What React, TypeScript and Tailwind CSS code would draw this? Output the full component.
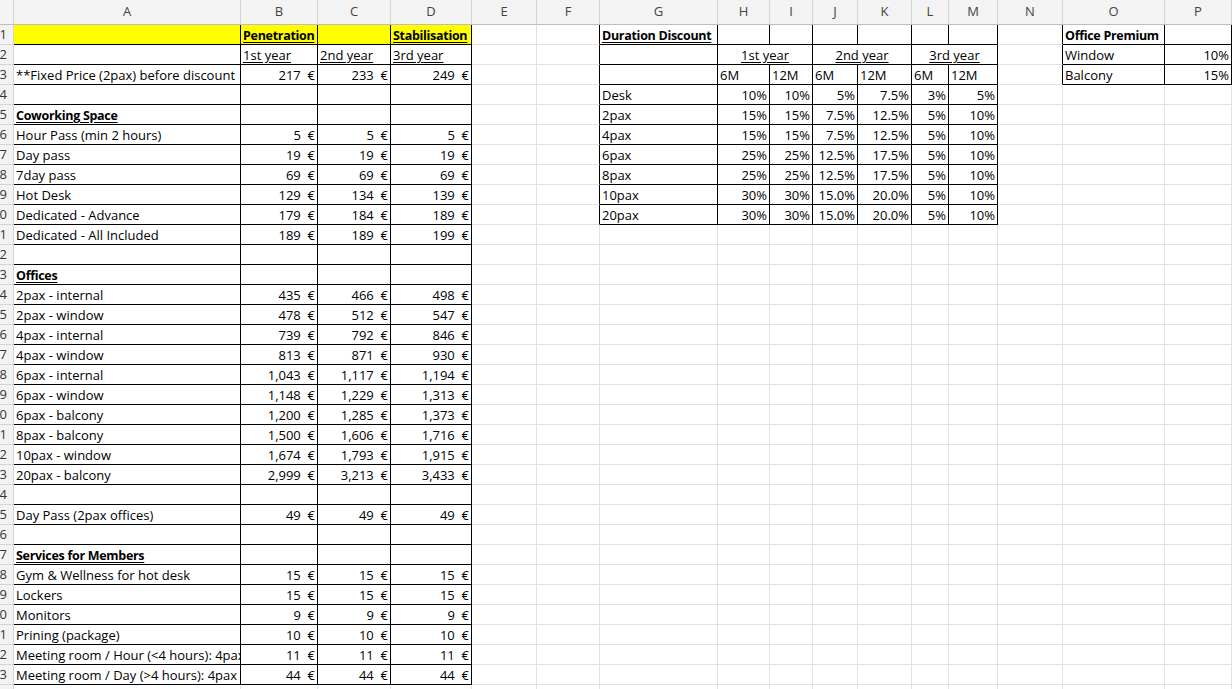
import React from "react";

const widths = [14, 227, 77, 73, 81, 65, 63, 118, 52, 43, 45, 54, 37, 49, 65, 102, 67];
const letters = ["", "A", "B", "C", "D", "E", "F", "G", "H", "I", "J", "K", "L", "M", "N", "O", "P"];
const NROWS = 34;

type Cell = { t: string; align?: "l" | "r" | "c"; b?: boolean; u?: boolean; span?: number };
const data: Record<string, Cell> = {};
const set = (r: number, c: number, cell: Cell) => (data[`${r}-${c}`] = cell);

const eur = (v: string) => ({ t: `${v}  €`, align: "r" as const });

// left table
set(1, 2, { t: "Penetration", b: true, u: true });
set(1, 4, { t: "Stabilisation", b: true, u: true });
set(2, 2, { t: "1st year", u: true });
set(2, 3, { t: "2nd year", u: true });
set(2, 4, { t: "3rd year", u: true });
const rows: [number, string, string[] | null, boolean?][] = [
  [3, "**Fixed Price (2pax) before discount", ["217", "233", "249"]],
  [5, "Coworking Space", null, true],
  [6, "Hour Pass (min 2 hours)", ["5", "5", "5"]],
  [7, "Day pass", ["19", "19", "19"]],
  [8, "7day pass", ["69", "69", "69"]],
  [9, "Hot Desk", ["129", "134", "139"]],
  [10, "Dedicated - Advance", ["179", "184", "189"]],
  [11, "Dedicated - All Included", ["189", "189", "199"]],
  [13, "Offices", null, true],
  [14, "2pax - internal", ["435", "466", "498"]],
  [15, "2pax - window", ["478", "512", "547"]],
  [16, "4pax - internal", ["739", "792", "846"]],
  [17, "4pax - window", ["813", "871", "930"]],
  [18, "6pax - internal", ["1,043", "1,117", "1,194"]],
  [19, "6pax - window", ["1,148", "1,229", "1,313"]],
  [20, "6pax - balcony", ["1,200", "1,285", "1,373"]],
  [21, "8pax - balcony", ["1,500", "1,606", "1,716"]],
  [22, "10pax - window", ["1,674", "1,793", "1,915"]],
  [23, "20pax - balcony", ["2,999", "3,213", "3,433"]],
  [25, "Day Pass (2pax offices)", ["49", "49", "49"]],
  [27, "Services for Members", null, true],
  [28, "Gym & Wellness for hot desk", ["15", "15", "15"]],
  [29, "Lockers", ["15", "15", "15"]],
  [30, "Monitors", ["9", "9", "9"]],
  [31, "Prining (package)", ["10", "10", "10"]],
  [32, "Meeting room / Hour (<4 hours): 4pax", ["11", "11", "11"]],
  [33, "Meeting room / Day (>4 hours): 4pax", ["44", "44", "44"]],
];
rows.forEach(([r, label, vals, head]) => {
  set(r, 1, { t: label, b: head, u: head });
  vals?.forEach((v, i) => set(r, 2 + i, eur(v)));
});

// duration discount
set(1, 7, { t: "Duration Discount", b: true, u: true });
set(2, 8, { t: "1st year", u: true, align: "c", span: 2 });
set(2, 10, { t: "2nd year", u: true, align: "c", span: 2 });
set(2, 12, { t: "3rd year", u: true, align: "c", span: 2 });
["6M", "12M", "6M", "12M", "6M", "12M"].forEach((t, i) => set(3, 8 + i, { t }));
const disc: [string, string[]][] = [
  ["Desk", ["10%", "10%", "5%", "7.5%", "3%", "5%"]],
  ["2pax", ["15%", "15%", "7.5%", "12.5%", "5%", "10%"]],
  ["4pax", ["15%", "15%", "7.5%", "12.5%", "5%", "10%"]],
  ["6pax", ["25%", "25%", "12.5%", "17.5%", "5%", "10%"]],
  ["8pax", ["25%", "25%", "12.5%", "17.5%", "5%", "10%"]],
  ["10pax", ["30%", "30%", "15.0%", "20.0%", "5%", "10%"]],
  ["20pax", ["30%", "30%", "15.0%", "20.0%", "5%", "10%"]],
];
disc.forEach(([l, v], i) => {
  set(4 + i, 7, { t: l });
  v.forEach((x, j) => set(4 + i, 8 + j, { t: x, align: "r" }));
});

// office premium
set(1, 15, { t: "Office Premium", b: true });
set(2, 15, { t: "Window" });
set(2, 16, { t: "10%", align: "r" });
set(3, 15, { t: "Balcony" });
set(3, 16, { t: "15%", align: "r" });

const isBlack = (r: number, c: number) =>
  (c >= 1 && c <= 4 && r >= 1 && r <= 33) ||
  (c >= 7 && c <= 13 && r >= 1 && r <= 10) ||
  (c >= 15 && c <= 16 && r >= 1 && r <= 3);

export default function App() {
  const cells: React.ReactNode[] = [];
  for (let r = 1; r <= NROWS; r++) {
    // row number, clipped on the left like the screenshot
    cells.push(
      <div key={`h${r}`} className="flex items-center justify-end overflow-hidden border-r border-b border-[#d4d4d4] bg-[#f3f3f3] pr-[6px] text-[13px] text-[#333]">
        <span className="whitespace-nowrap">{r}</span>
      </div>
    );
    for (let c = 1; c <= 16; c++) {
      const cell = data[`${r}-${c}`];
      const span = cell?.span ?? 1;
      const last = c + span - 1;
      const rightBlack = isBlack(r, last) || isBlack(r, last + 1);
      const bottomBlack = isBlack(r, c) || isBlack(r + 1, c);
      const yellow = r === 1 && c >= 1 && c <= 4;
      const align = cell?.align === "r" ? "justify-end" : cell?.align === "c" ? "justify-center" : "justify-start";
      cells.push(
        <div
          key={`${r}-${c}`}
          style={span > 1 ? { gridColumn: `span ${span}` } : undefined}
          className={`flex items-end overflow-hidden whitespace-pre border-r border-b px-[2px] leading-[17px] text-black ${align} ${
            rightBlack ? "border-r-black" : "border-r-[#e1e1e1]"
          } ${bottomBlack ? "border-b-black" : "border-b-[#e1e1e1]"} ${yellow ? "bg-[#ffff00]" : "bg-white"} ${
            cell?.b ? "text-[12.5px] font-bold tracking-[-0.3px]" : "text-[13px]"
          } ${cell?.u ? "underline underline-offset-2" : ""}`}
        >
          {cell?.t ?? ""}
        </div>
      );
      if (span > 1) c = last;
    }
  }

  return (
    <div
      className="h-[689px] w-[1232px] overflow-hidden bg-white"
      style={{ fontFamily: '"Open Sans", "Liberation Sans", sans-serif' }}
    >
      <div
        className="grid"
        style={{ gridTemplateColumns: widths.map((w) => `${w}px`).join(" "), gridTemplateRows: `25px repeat(${NROWS}, 20px)` }}
      >
        {letters.map((l, i) => (
          <div
            key={`col${i}`}
            className="flex items-center justify-center border-r border-b border-r-[#d4d4d4] border-b-[#bdbdbd] bg-[#f3f3f3] text-[13px] text-[#444]"
          >
            {l}
          </div>
        ))}
        {cells}
      </div>
    </div>
  );
}
